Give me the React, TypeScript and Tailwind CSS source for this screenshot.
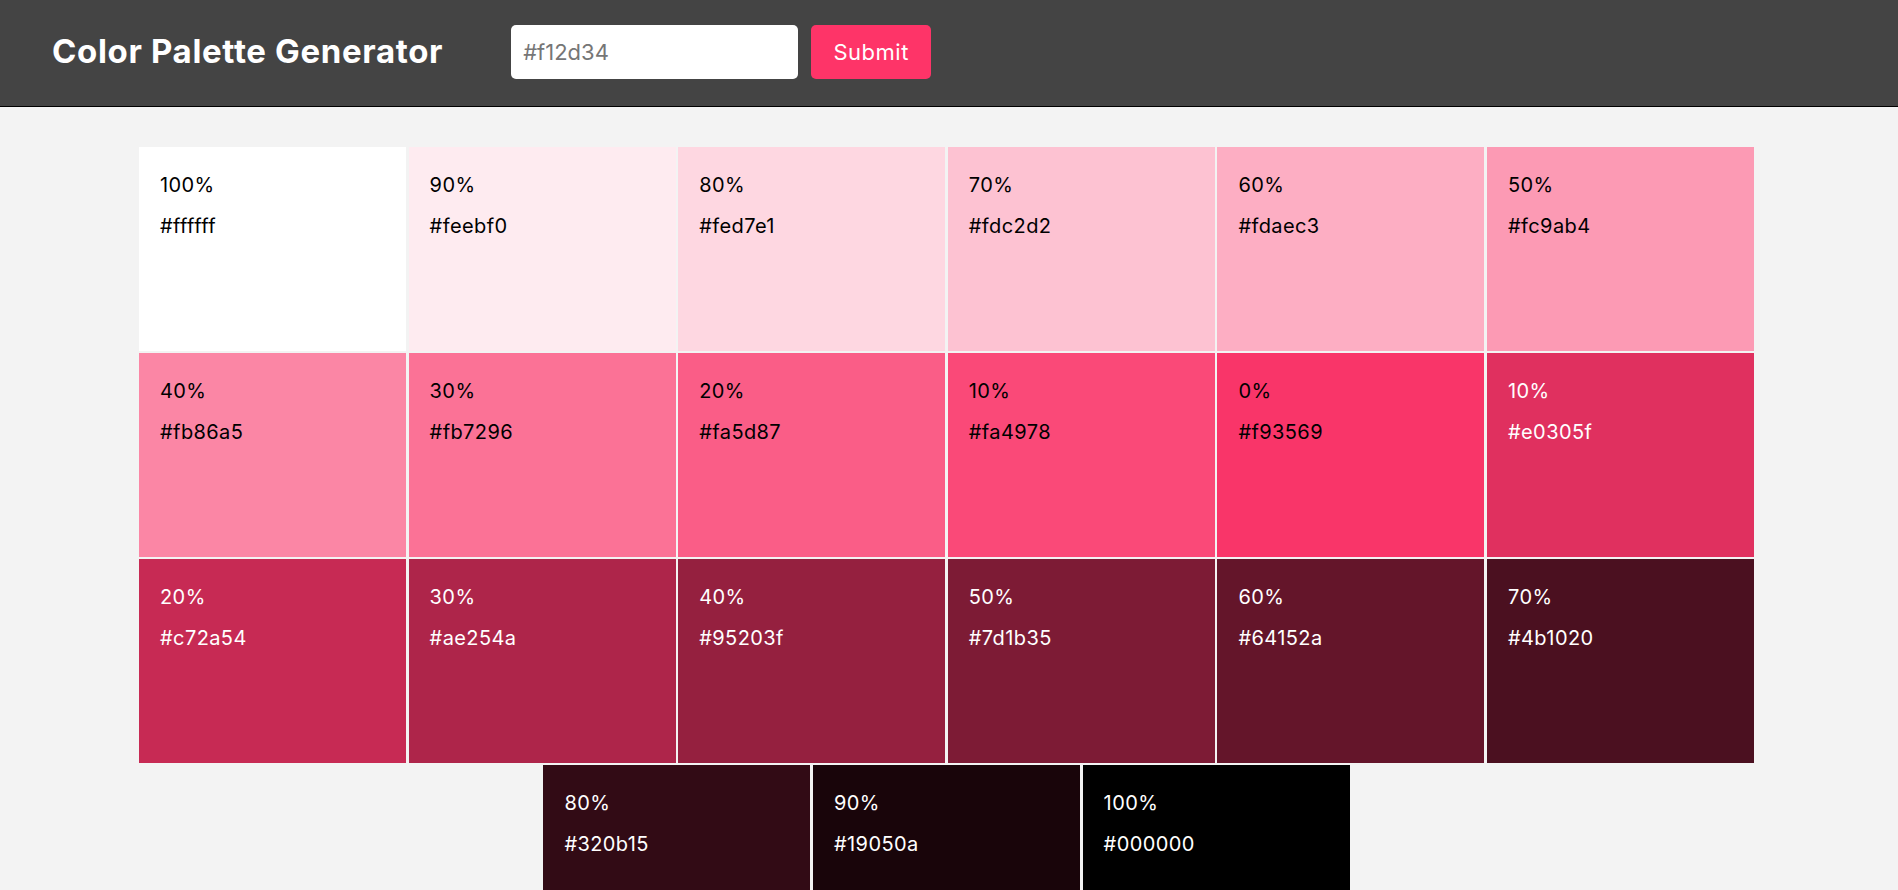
import React from 'react';

type Swatch = { pct: string; hex: string; dark: boolean };

const swatches: Swatch[] = [
  { pct: '100%', hex: '#ffffff', dark: false },
  { pct: '90%', hex: '#feebf0', dark: false },
  { pct: '80%', hex: '#fed7e1', dark: false },
  { pct: '70%', hex: '#fdc2d2', dark: false },
  { pct: '60%', hex: '#fdaec3', dark: false },
  { pct: '50%', hex: '#fc9ab4', dark: false },
  { pct: '40%', hex: '#fb86a5', dark: false },
  { pct: '30%', hex: '#fb7296', dark: false },
  { pct: '20%', hex: '#fa5d87', dark: false },
  { pct: '10%', hex: '#fa4978', dark: false },
  { pct: '0%', hex: '#f93569', dark: false },
  { pct: '10%', hex: '#e0305f', dark: true },
  { pct: '20%', hex: '#c72a54', dark: true },
  { pct: '30%', hex: '#ae254a', dark: true },
  { pct: '40%', hex: '#95203f', dark: true },
  { pct: '50%', hex: '#7d1b35', dark: true },
  { pct: '60%', hex: '#64152a', dark: true },
  { pct: '70%', hex: '#4b1020', dark: true },
  { pct: '80%', hex: '#320b15', dark: true },
  { pct: '90%', hex: '#19050a', dark: true },
  { pct: '100%', hex: '#000000', dark: true },
];

const App: React.FC = () => {
  return (
    <div className="min-h-screen bg-[#f3f3f3] font-['Inter',sans-serif]">
      {/* Top bar */}
      <header className="h-[107px] bg-[#444444] border-b border-black flex items-center pl-[52px] pb-[2px]">
        <h1 className="text-[33px] font-bold text-white tracking-[0.65px]">Color Palette Generator</h1>
        <form className="flex items-center ml-[68px] gap-[13px]" onSubmit={(e) => e.preventDefault()}>
          <input
            type="text"
            placeholder="#f12d34"
            className="w-[287px] h-[54px] rounded-[5px] bg-white px-[12px] text-[22px] text-[#333] placeholder:text-[#767676] outline-none"
          />
          <button
            type="submit"
            className="w-[120px] h-[54px] rounded-[5px] bg-[#fe3468] text-white text-[22px] tracking-[0.5px]"
          >
            Submit
          </button>
        </form>
      </header>

      {/* Palette grid */}
      <main className="pt-[40px] pl-[139px]">
        <div className="w-[1615px] flex flex-wrap justify-center gap-x-[2.6px] gap-y-[2px]">
          {swatches.map((s, i) => (
            <div
              key={i}
              className={`w-[267px] h-[204px] pl-[21px] pt-[26px] ${s.dark ? 'text-white' : 'text-black'}`}
              style={{ backgroundColor: s.hex }}
            >
              <p className="text-[20px] leading-[24px] tracking-[0.4px]">{s.pct}</p>
              <p className="text-[20px] leading-[24px] tracking-[0.4px] mt-[17px]">{s.hex}</p>
            </div>
          ))}
        </div>
      </main>
    </div>
  );
};

export default App;
